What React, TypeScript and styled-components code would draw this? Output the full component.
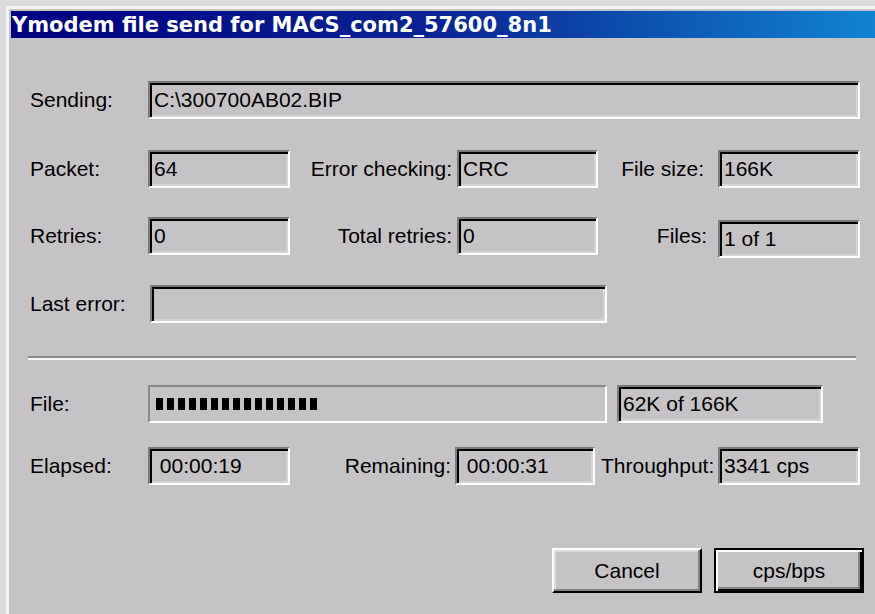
import React from 'react'
import styled, { createGlobalStyle } from 'styled-components'

const GlobalStyle = createGlobalStyle`
  html, body {
    margin: 0;
    padding: 0;
    background: #dadada;
  }
  body {
    font-family: "Liberation Sans", Arial, sans-serif;
    color: #000;
  }
`

const Window = styled.div`
  margin: 6px 0 0 6px;
  height: 608px;
  box-sizing: border-box;
  border-top: 3px solid #f4f4f4;
  border-left: 3px solid #f4f4f4;
  padding: 2px 0 0 2px;
  background: #c6c3c6;
  display: flex;
  flex-direction: column;
  overflow: hidden;
`

const TitleBar = styled.div`
  height: 27px;
  flex-shrink: 0;
  background: linear-gradient(90deg, #000080 0%, #0a2596 50%, #1084d0 100%);
  color: #fff;
  font: bold 21px "DejaVu Sans", Verdana, sans-serif;
  display: flex;
  align-items: center;
  padding-left: 1px;
  white-space: nowrap;
`

const Body = styled.div`
  padding: 43px 0 0 19px;
  display: flex;
  flex-direction: column;
  font-size: 21px;
`

const Row = styled.div<{ $mt: number }>`
  display: flex;
  align-items: center;
  margin-top: ${p => p.$mt}px;
  height: 38px;
`

const Label = styled.span<{ $w: number; $right?: boolean; $pr?: number; $pl?: number }>`
  width: ${p => p.$w}px;
  flex-shrink: 0;
  box-sizing: border-box;
  text-align: ${p => (p.$right ? 'right' : 'left')};
  padding-right: ${p => p.$pr || 0}px;
  padding-left: ${p => p.$pl || 0}px;
  white-space: nowrap;
`

/* read-only edit box, sunken edge */
const Field = styled.div<{ $w: number; $dy?: number }>`
  width: ${p => p.$w}px;
  height: 38px;
  flex-shrink: 0;
  box-sizing: border-box;
  border: 2px solid;
  border-color: #7b7b7b #fdfdfd #fdfdfd #7b7b7b;
  box-shadow: inset 2px 2px 0 #000, inset -2px -2px 0 #d6d3d6;
  padding: 0 0 0 4px;
  display: flex;
  align-items: center;
  white-space: nowrap;
  position: relative;
  top: ${p => p.$dy || 0}px;
`

const Progress = styled.div<{ $w: number }>`
  width: ${p => p.$w}px;
  height: 38px;
  flex-shrink: 0;
  box-sizing: border-box;
  border: 2px solid;
  border-color: #8a888a #fdfdfd #fdfdfd #8a888a;
  display: flex;
  align-items: center;
  gap: 4px;
  padding-left: 6px;
`

const Block = styled.span`
  width: 7px;
  height: 12px;
  background: #000;
`

const Separator = styled.div`
  margin: 33px 0 0 -2px;
  width: 828px;
  border-top: 2px solid #8c8a8c;
  border-bottom: 2px solid #f6f6f6;
`

const Gap = styled.div<{ $w: number }>`
  width: ${p => p.$w}px;
  flex-shrink: 0;
`

const ButtonRow = styled.div`
  display: flex;
  justify-content: flex-end;
  gap: 12px;
  margin: 63px 11px 0 0;
`

const Button = styled.button<{ $default?: boolean }>`
  width: 150px;
  height: 45px;
  box-sizing: border-box;
  background: #c6c3c6;
  font: 21px "Liberation Sans", Arial, sans-serif;
  color: #000;
  padding: 0;
  border: 2px solid;
  border-color: ${p => (p.$default ? '#000' : '#fdfdfd #000 #000 #fdfdfd')};
  box-shadow: ${p =>
    p.$default
      ? 'inset 2px 2px 0 #fdfdfd, inset -2px -2px 0 #000, inset -4px -4px 0 #848284'
      : 'inset -2px -2px 0 #848284, inset 2px 2px 0 #dedbde'};
`

const App: React.FC = () => {
  const blocks = Array.from({ length: 15 })
  return (
    <>
      <GlobalStyle />
      <Window>
        <TitleBar>Ymodem file send for MACS_com2_57600_8n1</TitleBar>
        <Body>
          <Row $mt={0}>
            <Label $w={118}>Sending:</Label>
            <Field $w={712}>C:\300700AB02.BIP</Field>
          </Row>
          <Row $mt={31}>
            <Label $w={118}>Packet:</Label>
            <Field $w={142}>64</Field>
            <Label $w={167} $right $pr={5}>Error checking:</Label>
            <Field $w={141}>CRC</Field>
            <Label $w={120} $right $pr={14}>File size:</Label>
            <Field $w={142}>166K</Field>
          </Row>
          <Row $mt={29}>
            <Label $w={118}>Retries:</Label>
            <Field $w={142}>0</Field>
            <Label $w={167} $right $pr={5}>Total retries:</Label>
            <Field $w={141}>0</Field>
            <Label $w={120} $right $pr={11}>Files:</Label>
            <Field $w={142} $dy={3}>1 of 1</Field>
          </Row>
          <Row $mt={30}>
            <Label $w={120}>Last error:</Label>
            <Field $w={457} />
          </Row>
          <Separator />
          <Row $mt={25}>
            <Label $w={118}>File:</Label>
            <Progress $w={459}>
              {blocks.map((_, i) => (
                <Block key={i} />
              ))}
            </Progress>
            <Gap $w={10} />
            <Field $w={206}>62K of 166K</Field>
          </Row>
          <Row $mt={24}>
            <Label $w={118}>Elapsed:</Label>
            <Field $w={142}>&nbsp;00:00:19</Field>
            <Label $w={165} $right $pr={4}>Remaining:</Label>
            <Field $w={140}>&nbsp;00:00:31</Field>
            <Label $w={123} $pl={6}>Throughput:</Label>
            <Field $w={142}>3341 cps</Field>
          </Row>
          <ButtonRow>
            <Button>Cancel</Button>
            <Button $default>cps/bps</Button>
          </ButtonRow>
        </Body>
      </Window>
    </>
  )
}

export default App
